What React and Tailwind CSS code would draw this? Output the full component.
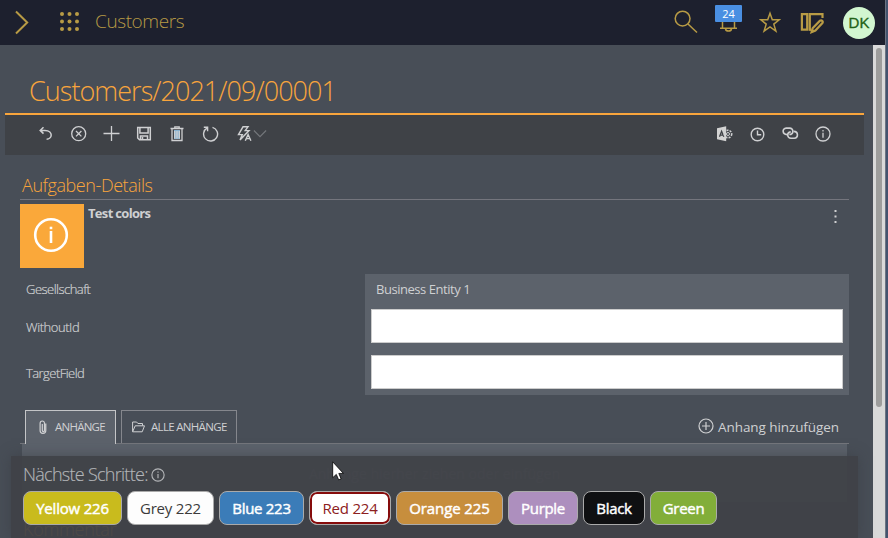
import React from 'react';

const fontClass = "font-['Open_Sans','Noto_Sans',sans-serif]";

function Icon({ className, children, box = '0 0 16 16', width = 1 }) {
  return (
    <svg viewBox={box} fill="none" stroke="currentColor" strokeWidth={width} className={`block shrink-0 ${className}`}>
      {children}
    </svg>
  );
}

function InfoCircle({ className, width = 1 }) {
  return (
    <Icon className={className} width={width}>
      <circle cx="8" cy="8" r="7" />
      <path d="M8 6.8v5" />
      <path d="M8 4.1v1.4" />
    </Icon>
  );
}

function Header() {
  return (
    <header className="flex h-[45px] shrink-0 items-start bg-[#1d202e] text-[#b89b45]">
      <Icon className="ml-[14px] mt-[10px] h-[25px] w-[15px]" box="0 0 15 25" width={2}>
        <path d="M2 1.5L13.2 12.5L2 23.5" />
      </Icon>
      <svg viewBox="0 0 20 20" className="ml-[31px] mt-[12px] block size-5 shrink-0" fill="currentColor">
        {[2, 9.5, 17].map((y) => [2, 9.5, 17].map((x) => <circle key={`${x}-${y}`} cx={x} cy={y} r="2" />))}
      </svg>
      <span className="ml-[15px] mt-[7px] w-[110px] whitespace-nowrap text-[19px] font-light leading-7 tracking-[-0.4px]">Customers</span>
      <div className="ml-auto flex items-start">
        <Icon className="mt-[10px] h-6 w-6" box="0 0 24 24" width={1.5}>
          <circle cx="8.6" cy="8.6" r="7.4" />
          <path d="M14 14L23 22.5" />
        </Icon>
        <div className="relative ml-[17px] h-[34px] w-[27px]">
          <Icon className="ml-[4px] mt-[12px] h-5 w-[19px]" box="0 0 19 20" width={1.5}>
            <path d="M3.5 1v14.5M15.5 1v14.5M1 16.3h17M6.5 17c.5 2.8 5.5 2.8 6 0" />
          </Icon>
          <span className="absolute left-0 top-[5px] flex h-[17px] w-[27px] items-center justify-center rounded-[1px] bg-[#4a8fe2] text-[11px] leading-none text-white">24</span>
        </div>
        <Icon className="ml-[17px] mt-[11px] h-[22px] w-[22px]" box="0 0 22 22" width={1.5}>
          <path d="M11 2.3L13.3 8.8H20.2L14.8 13.1L16.9 20L11 15.8L5.1 20L7.2 13.1L1.8 8.8H8.7Z" />
        </Icon>
        <Icon className="ml-[19px] mt-[12px] h-[22px] w-6" box="0 0 24 22" width={2.2}>
          <path d="M1.9 2.1h5.3v15.6H1.9zM9.8 1v17.8" />
          <path d="M9.5 2.1h13v4M9.5 17.7h2" />
          <path d="M12.8 16L20 8.7q1.2-.8 2.2.2t.2 2.2L15.4 18.5l-3.8 1.6z" />
        </Icon>
        <span className="ml-[19px] mt-[7px] mr-[10px] flex size-8 items-center justify-center rounded-full bg-[#d2f6d0] font-['Liberation_Sans',sans-serif] text-[15px] text-[#1f6216] [-webkit-text-stroke:0.3px_#1f6216]">DK</span>
      </div>
    </header>
  );
}

function Toolbar() {
  return (
    <div className="ml-[5px] flex h-[42px] w-[859px] shrink-0 items-start border-t-2 border-[#f9a53c] bg-[#3f4247] pt-[11px] text-[#cfd0d2]">
      <Icon className="ml-[33px] size-4" width={1.5}>
        <path d="M5.5 1.2L2.2 4.4L5.5 7.6M2.5 4.4H7C11.5 4.4 13.2 7 13.2 9C13.2 11.5 11 13.2 8.6 13.2" />
      </Icon>
      <Icon className="ml-[17px] size-4" width={1.3}>
        <circle cx="7.7" cy="7.7" r="7" />
        <path d="M5 5l5.4 5.4M10.4 5L5 10.4" />
      </Icon>
      <Icon className="ml-[16px] size-[17px]" box="0 0 17 17" width={1.3}>
        <path d="M.5 7.5h16M8.5 0v15" />
      </Icon>
      <Icon className="ml-[16px] size-4" width={1.5}>
        <path d="M1.7 1.5h12.6v12.3H3.5l-1.8-1.8zM3.9 1.5v5.6h8.2V1.5M4.5 14v-4h7v4M6.5 11v3" />
      </Icon>
      <Icon className="ml-[17px] size-4" width={1.3}>
        <rect x="5" y="4" width="6" height="9" fill="#87b2d0" stroke="none" />
        <path d="M1.5 2.5h13M5.8 2V.8h4.4V2M3 2.8v11.7h10V2.8M5.7 5v7.5M8 5v7.5M10.3 5v7.5" />
      </Icon>
      <Icon className="ml-[17px] size-[17px]" box="0 0 17 17" width={1.4}>
        <path d="M10.5 1.3A7 7 0 1 1 5.2 1.9M1.8 1.2H5.6V5.2" />
      </Icon>
      <Icon className="ml-[18px] size-4" width={1.4}>
        <path d="M6 .8h5L8.2 4.6h3.8L3 14l2.3-5.4H1.5zM8.3 14.8l2.8-6.4 2.8 6.4M9.4 12.6h3.5" />
      </Icon>
      <Icon className="mt-[3px] h-[10px] w-[14px] text-[#74777b]" box="0 0 13 10" width={1.1}>
        <path d="M.4 1.5L6.5 7.7L12.6 1.5" />
      </Icon>
      <div className="ml-auto flex items-start">
        <svg viewBox="0 0 16 16" className="block size-4">
          <path d="M0 2.2L9.2 .3v15L0 13.3z" fill="#d3d3d3" />
          <path d="M2.5 10.8L4.6 5.2l2.2 5.6M3.2 9.2h2.8" fill="none" stroke="#3f4247" strokeWidth="1.3" />
          <circle cx="11" cy="8" r="3.7" fill="none" stroke="#cfd0d2" strokeWidth="1.6" strokeDasharray="2 1.1" />
          <circle cx="11" cy="8" r="1.5" fill="none" stroke="#cfd0d2" />
        </svg>
        <Icon className="ml-[17px] size-4" width={1.4}>
          <circle cx="7.5" cy="8.5" r="6.3" />
          <path d="M7.5 4.5v4.3h3.7" />
        </Icon>
        <Icon className="ml-[16px] size-[17px]" box="0 0 17 17" width={1.6}>
          <path d="M5 8.6C.2 8.4 -.2 2.4 4.2 2.1h3.6c3.4.2 4.2 4.6 1.2 6.3H7.4" />
          <path d="M11.6 5.4c5 .2 5 6.4.6 6.8H8.9c-3.6-.2-4.4-4.6-1.2-6.2h1.2" />
        </Icon>
        <InfoCircle className="ml-[16px] mr-[33px] size-4" width={1.3} />
      </div>
    </div>
  );
}

const steps = [
  { label: 'Yellow 226', className: 'w-[99px] bg-[#c9bb1d]', text: 'tracking-[-0.2px] text-white [-webkit-text-stroke:0.45px_white]' },
  { label: 'Grey 222', className: 'w-[87px] bg-[#fdfdfd]', text: 'tracking-[-0.2px] text-[#3b3b3b]' },
  { label: 'Blue 223', className: 'w-[85px] bg-[#3b7cb8]', text: 'tracking-[-0.3px] text-white [-webkit-text-stroke:0.45px_white]' },
  { label: 'Red 224', className: 'w-[82px] bg-white shadow-[inset_0_0_0_2px_#860c0c]', text: 'tracking-[-0.2px] text-[#8c2020]' },
  { label: 'Orange 225', className: 'w-[107px] bg-[#c78e3d]', text: 'tracking-[-0.1px] text-white [-webkit-text-stroke:0.45px_white]' },
  { label: 'Purple', className: 'w-[70px] bg-[#ad8fbe]', text: 'tracking-[-0.3px] text-white [-webkit-text-stroke:0.45px_white]' },
  { label: 'Black', className: 'w-[62px] bg-[#0f1012]', text: 'tracking-[-0.3px] text-white [-webkit-text-stroke:0.45px_white]' },
  { label: 'Green', className: 'w-[67px] bg-[#82ae39]', text: 'tracking-[-0.3px] text-white [-webkit-text-stroke:0.45px_white]' },
];

function NextSteps() {
  return (
    <div className="absolute left-[11px] top-[456px] h-[82px] w-[847px] bg-[#3f4247]/93 pl-[12px] pt-[6px] shadow-[0_0_12px_rgba(55,58,63,0.55)]">
      <div className="flex h-[25px] items-center text-[#b3b5b8]">
        <span className="w-[127px] whitespace-nowrap text-[18px] font-light leading-[25px] tracking-[-0.72px] [-webkit-text-stroke:0.15px_#b3b5b8]">Nächste Schritte:</span>
        <InfoCircle className="ml-px size-[14px]" width={1.3} />
      </div>
      <div className="mt-1 flex gap-[5px]">
        {steps.map((s) => (
          <button key={s.label} className={`flex h-[34px] shrink-0 items-center justify-center whitespace-nowrap rounded-[8px] border border-[#aaa] text-[15px] ${s.className}`}>
            <span className={s.text}>{s.label}</span>
          </button>
        ))}
      </div>
    </div>
  );
}

function Details() {
  return (
    <section className="ml-[20px] w-[829px] text-[#cfd0d2]">
      <h2 className="mt-[17px] h-[28px] border-b border-[#74757d] pl-[2px] text-[18px] font-light leading-[27px] tracking-[-0.43px] text-[#f9a53c]">Aufgaben-Details</h2>
      <div className="mt-[4px] flex h-[64px] items-start">
        <div className="flex size-16 items-center justify-center bg-[#faa83a] text-white">
          <Icon className="mr-[2px] mb-[2px] size-9" box="0 0 36 36" width={2.6}>
            <circle cx="18" cy="18" r="15.8" />
            <path d="M18 14v12" />
            <path d="M18 9.7v2.5" />
          </Icon>
        </div>
        <span className="ml-1 text-[13px] font-bold leading-[18px] tracking-[-0.68px]">Test colors</span>
        <svg viewBox="0 0 3 14" className="mt-[5px] mr-[12px] ml-auto h-[14px] w-[3px]" fill="currentColor">
          <path d="M.5 1h2v2h-2zM.5 6.5h2v2h-2zM.5 12h2v2h-2z" />
        </svg>
      </div>
      <div className="mt-[6px] flex h-[121px] text-[13px]">
        <div className="flex w-[345px] flex-col pl-[6px] font-light leading-[18px] [-webkit-text-stroke:0.2px_#cfd0d2]">
          <span className="mt-[6px] tracking-[-0.52px]">Gesellschaft</span>
          <span className="mt-[20px] tracking-[-0.45px]">WithoutId</span>
          <span className="mt-[28px] tracking-[-0.55px]">TargetField</span>
        </div>
        <div className="flex w-[484px] flex-col bg-[#5c626b] px-[6px]">
          <span className="mt-[6px] h-[29px] pl-[5px] leading-[18px] tracking-[-0.46px]">Business Entity 1</span>
          <div className="h-[34px] border border-[#ccc] bg-white" />
          <div className="mt-[12px] h-[34px] border border-[#ccc] bg-white" />
        </div>
      </div>
      <div className="mt-[15px] flex h-[34px] items-start border-b border-[#74767c] pl-[5px] text-[11.5px]">
        <div className="flex h-[34px] w-[91px] items-center border border-b-0 border-[#c4c5c7] bg-[#5c626b] pb-px pl-[13px]">
          <Icon className="h-[14px] w-[8px]" box="0 0 8 14" width={1.2}>
            <path d="M6.8 3.5v7c0 3.8-5.7 3.8-5.7 0V3.4c0-3.2 4.4-3.2 4.4 0v6.8c0 1.8-2.2 1.8-2.2 0V4" />
          </Icon>
          <span className="ml-[8px] tracking-[-0.75px]">ANHÄNGE</span>
        </div>
        <div className="ml-[5px] flex h-[33px] w-[116px] items-center border border-b-0 border-[#85878d] pl-[10px]">
          <Icon className="h-3 w-[13px]" box="0 0 13 12" width={1}>
            <path d="M.6 10.5V1h4l1.3 1.5h4.6v2.2M.6 10.8L3.2 4.8h9.3l-2.3 6z" />
          </Icon>
          <span className="ml-[6px] whitespace-nowrap tracking-[-0.68px]">ALLE ANHÄNGE</span>
        </div>
        <div className="ml-auto mr-[10px] flex h-[34px] items-center">
          <Icon className="mb-[2px] size-4" width={1.2}>
            <circle cx="8" cy="8" r="7" />
            <path d="M8 4v8M4 8h8" />
          </Icon>
          <span className="ml-1 whitespace-nowrap text-[13.5px] leading-[18px] tracking-[-0.08px]">Anhang hinzufügen</span>
        </div>
      </div>
      <div className="mx-[2px] h-[58px] bg-[#5c626b] pt-[20px] text-center text-[14px] leading-[20px] text-[#777a80]">
        Anhänge hierher ziehen oder einfügen
      </div>
      <div className="mt-[19px] pl-[3px] text-[18px] font-light leading-[17px] tracking-[-0.3px] text-[#f9a53c]">Kommentar</div>
    </section>
  );
}

export default function App() {
  return (
    <div className={`relative flex h-[538px] w-[888px] overflow-hidden bg-[#484e57] ${fontClass}`}>
      <div className="flex w-[885px] flex-col">
        <Header />
        <div className="flex min-h-0 flex-1">
          <main className="flex w-[873px] flex-col">
            <h1 className="mt-[27px] ml-[29px] h-[41px] shrink-0 whitespace-nowrap text-[27px] font-light leading-[37px] tracking-[-0.96px] text-[#f9a53c]">Customers/2021/09/00001</h1>
            <Toolbar />
            <Details />
          </main>
          <div className="w-3 bg-[#d9d9d9] pl-[3px] pt-[3px]">
            <div className="h-[359px] w-[6px] rounded-full bg-[#9d9d9c]" />
          </div>
        </div>
      </div>
      <div className="w-[3px] border-l border-[#6c7482] bg-[#43536e]" />
      <NextSteps />
      <svg viewBox="0 0 12 20" className="absolute left-[332px] top-[461px] h-5 w-3">
        <path d="M.7 .8V16.7L4.3 13.4L6.7 18.9L9.1 17.8L6.8 12.4H11.4Z" fill="#fff" stroke="#000" strokeWidth=".8" />
      </svg>
    </div>
  );
}
